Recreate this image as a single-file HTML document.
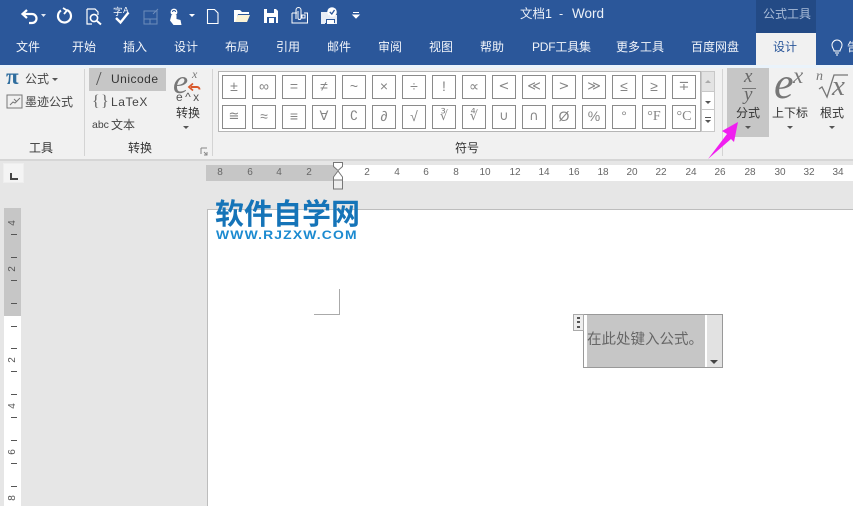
<!DOCTYPE html>
<html><head><meta charset="utf-8">
<style>
html,body{margin:0;padding:0}
body{width:853px;height:506px;overflow:hidden;position:relative;background:#e6e6e6;font-family:"Liberation Sans","Noto Sans CJK SC",sans-serif;color:#333}
div,span.a{position:absolute}
.t{position:absolute;white-space:nowrap;line-height:16px;font-size:12px}
.w{color:#f2f5fa;top:39px}
.r{position:absolute;top:167px;font-size:10px;line-height:12px;width:20px;text-align:center;color:#666}
.s{position:absolute;width:22px;height:22px;border:1px solid #8a8a8a;background:#fff;text-align:center;color:#858585;font-size:14px;line-height:21px;font-family:"Liberation Sans","DejaVu Sans",sans-serif}
.s1{top:75px}.s2{top:105px}
.d{font-family:"DejaVu Sans",sans-serif;font-size:13px}
.tick{position:absolute;left:11px;width:6px;height:1px;background:#555}
.vn{position:absolute;left:6px;width:14px;height:12px;font-size:10px;line-height:12px;text-align:center;color:#555;transform:rotate(-90deg)}
.tri{position:absolute;width:0;height:0;border-left:3px solid transparent;border-right:3px solid transparent;border-top:3px solid #555}
.sep{position:absolute;width:1px;background:#d4d4d4}
</style></head>
<body>
<div style="left:0;top:0;width:853px;height:65px;background:#2b579a"></div>
<div style="left:756px;top:0;width:60px;height:33px;background:#234a85"></div>
<div style="left:756px;top:33px;width:60px;height:32px;background:#f1f1f1"></div>

<svg style="position:absolute;left:0;top:0" width="370" height="30" viewBox="0 0 370 30">
<g fill="none" stroke="#fff" stroke-width="2.2">
<path d="M23 14h9a4.500 4.500 0 0 1 0 9h-3"/><path d="M27 10l-4.500 4 4.500 4"/>
<path d="M67 10a6.500 6.500 0 1 1-6 0.500"/><path d="M63 8l4 2.500-3 3.500" stroke-width="1.800"/>
</g>
<path d="M41 14h5l-2.500 3z" fill="#dfe6f2"/>
<g fill="none" stroke="#fff" stroke-width="1.200">
<path d="M87 9h8l3 3v3M87 9v15h5"/><circle cx="94" cy="18" r="3.600" stroke-width="1.600"/><path d="M97 21l4 3.500" stroke-width="2"/>
</g>
<text x="113" y="15" font-size="9.500" fill="#fff" font-family="Noto Sans CJK SC">字</text>
<text x="123" y="13" font-size="8.500" fill="#fff">A</text>
<path d="M116 18l4.500 4.500 8-10" fill="none" stroke="#fff" stroke-width="2.400"/>
<g fill="none" stroke="#6d8cba" stroke-width="1">
<path d="M144 11h13v13h-13zM144 19h13M150 19v5M153 14l5-5"/>
</g>
<g fill="#fff"><circle cx="174" cy="12" r="3.400"/><path d="M171.500 15h5v4l4 1 1 5h-8l-3.500-4.500z"/></g>
<path d="M172.500 12a1.500 1.500 0 0 1 3 0" stroke="#2b579a" fill="none"/>
<path d="M189 14h6l-3 3z" fill="#fff"/>
<path d="M207.500 9.500h7l3.500 3.500v10.500h-10.500z" fill="none" stroke="#fff" stroke-width="1.100"/>
<path d="M234 22v-12h6l2 2h7v2h-11l-2 8z" fill="#fff"/><path d="M235 22l3-7h12l-3 7z" fill="#fbf3d6"/>
<path d="M264 9h12l2 2v12h-14z" fill="#fff"/><path d="M267 9h7v4h-7zM267 17h9v6h-9z" fill="#2b579a"/><path d="M269 18h5v5h-5z" fill="#fff"/>
<g fill="none" stroke="#fff" stroke-width="1">
<path d="M292 13h5M304 13h3.500v10h-15.500v-10"/><path d="M296 19v-9a2.500 2.500 0 0 1 5 0v8a1.500 1.500 0 0 1-3 0v-7"/><path d="M302 15h3v3h-3z"/>
</g>
<path d="M321 12h8v4h5v-1h3v9h-4v-1h-8v1h-4z" fill="#e8edf5"/><circle cx="332" cy="12" r="4.800" fill="#fff"/><path d="M329.800 12l2 2 2.700-4" stroke="#2b579a" stroke-width="1.300" fill="none"/><path d="M326 19h9v4h-9z" fill="#2b579a"/><path d="M327 20h7v4h-7z" fill="#fff"/>
<path d="M353 12.500h6M353 15h6l-3 3z" stroke="#fff" stroke-width="1" fill="#fff"/>
</svg>

<span class="t" style="left:520px;top:6px;color:#eef2f8;font-size:12.500px">文档1</span>
<span class="t" style="left:559px;top:6px;color:#eef2f8;font-size:12.500px">-</span>
<span class="t" style="left:572px;top:6px;color:#eef2f8;font-size:13.500px">Word</span>
<span class="t" style="left:763px;top:6px;color:#a9bcd8">公式工具</span>
<span class="t w" style="left:16px">文件</span>
<span class="t w" style="left:72px">开始</span>
<span class="t w" style="left:123px">插入</span>
<span class="t w" style="left:174px">设计</span>
<span class="t w" style="left:225px">布局</span>
<span class="t w" style="left:276px">引用</span>
<span class="t w" style="left:327px">邮件</span>
<span class="t w" style="left:378px">审阅</span>
<span class="t w" style="left:429px">视图</span>
<span class="t w" style="left:480px">帮助</span>
<span class="t w" style="left:532px;letter-spacing:-.2px">PDF工具集</span>
<span class="t w" style="left:616px">更多工具</span>
<span class="t w" style="left:691px">百度网盘</span>
<span class="t" style="left:773px;top:39px;color:#2b579a">设计</span>
<svg style="position:absolute;left:829px;top:39px" width="16" height="18"><path d="M5 12c0-2-2-3-2-6a5 5 0 0 1 10 0c0 3-2 4-2 6zM6 14h4M7 16h2" fill="none" stroke="#fff"/></svg>
<span class="t w" style="left:847px">告</span>

<div style="left:0;top:65px;width:853px;height:95px;background:#f1f1f1"></div>
<div style="left:0;top:65px;width:853px;height:3px;background:#eaf3fb"></div>
<div style="left:0;top:159px;width:853px;height:2px;background:#d6d6d6"></div>
<div class="sep" style="left:84px;top:69px;height:87px"></div>
<div class="sep" style="left:212px;top:69px;height:87px"></div>
<div class="sep" style="left:722px;top:69px;height:87px"></div>

<span class="t" style="left:6px;top:65px;font-size:23px;line-height:24px;font-family:'Liberation Serif',serif;color:#2f6d9e;font-weight:bold">π</span>
<span class="t" style="left:25px;top:71px;color:#444">公式</span><div class="tri" style="left:52px;top:78px"></div>
<svg style="position:absolute;left:6px;top:94px" width="18" height="16"><rect x="1" y="1" width="15" height="13" fill="#f0f0f0" stroke="#777"/><path d="M4 11l3-3 2 1 5-5M8 5l3 3" fill="none" stroke="#777"/></svg>
<span class="t" style="left:25px;top:94px;color:#444">墨迹公式</span>
<span class="t" style="left:29px;top:140px">工具</span>

<div style="left:89px;top:68px;width:77px;height:23px;background:#c6c6c6"></div>
<span class="t" style="left:96px;top:69px;font-size:20px;line-height:20px;color:#555;font-family:'Liberation Serif',serif">/</span>
<span class="t" style="left:111px;top:71px;color:#333;letter-spacing:.5px">Unicode</span>
<span class="t" style="left:92px;top:92px;font-size:16px;line-height:20px;color:#666;font-family:'Liberation Serif',serif">{</span>
<span class="t" style="left:101px;top:92px;font-size:16px;line-height:20px;color:#666;font-family:'Liberation Serif',serif">}</span>
<span class="t" style="left:111px;top:94px;letter-spacing:.6px;color:#444">LaTeX</span>
<span class="t" style="left:92px;top:117px;font-size:10.500px;color:#444">abc</span>
<span class="t" style="left:111px;top:117px;color:#444">文本</span>
<span class="t" style="left:173px;top:68px;font-size:34px;line-height:30px;font-family:'Liberation Serif',serif;font-style:italic;color:#777">e</span>
<span class="t" style="left:192px;top:66px;font-size:12px;font-family:'Liberation Serif',serif;font-style:italic;color:#777">x</span>
<svg style="position:absolute;left:187px;top:82px" width="16" height="12"><path d="M4 5h6a2.500 2.500 0 0 1 2.500 2.500" fill="none" stroke="#d9582b" stroke-width="2"/><path d="M6 1.500L2 5l4 3.500" fill="none" stroke="#d9582b" stroke-width="1.800"/></svg>
<span class="t" style="left:176px;top:90px;font-size:12px;line-height:14px;color:#555;letter-spacing:2.400px">e^x</span>
<span class="t" style="left:176px;top:105px">转换</span>
<div class="tri" style="left:183px;top:126px"></div>
<span class="t" style="left:128px;top:140px">转换</span>
<svg style="position:absolute;left:200px;top:147px" width="9" height="9"><path d="M1 1h6M1 1v6M7 8l-3-3M7 5v3H4" fill="none" stroke="#888"/></svg>

<div style="left:218px;top:71px;width:483px;height:61px;background:#fff;border:1px solid #b5b5b5;box-sizing:border-box"></div>
<div class="s s1" style="left:222px">±</div><div class="s s1" style="left:252px">∞</div><div class="s s1" style="left:282px">=</div><div class="s s1" style="left:312px">≠</div><div class="s s1" style="left:342px">~</div><div class="s s1" style="left:372px">×</div><div class="s s1" style="left:402px">÷</div><div class="s s1" style="left:432px">!</div><div class="s s1" style="left:462px">∝</div><div class="s s1 d" style="left:492px">&lt;</div><div class="s s1 d" style="left:522px">≪</div><div class="s s1 d" style="left:552px">&gt;</div><div class="s s1 d" style="left:582px">≫</div><div class="s s1" style="left:612px">≤</div><div class="s s1" style="left:642px">≥</div><div class="s s1 d" style="left:672px">∓</div>
<div class="s s2 d" style="left:222px">≅</div><div class="s s2" style="left:252px">≈</div><div class="s s2" style="left:282px">≡</div><div class="s s2 d" style="left:312px">∀</div><div class="s s2 d" style="left:342px">∁</div><div class="s s2" style="left:372px">∂</div><div class="s s2" style="left:402px">√</div><div class="s s2 d" style="left:432px">∛</div><div class="s s2 d" style="left:462px">∜</div><div class="s s2 d" style="left:492px">∪</div><div class="s s2 d" style="left:522px">∩</div><div class="s s2" style="left:552px">Ø</div><div class="s s2" style="left:582px">%</div><div class="s s2" style="left:612px">°</div><div class="s s2" style="left:642px;font-family:'Liberation Serif',serif">°F</div><div class="s s2" style="left:672px;font-family:'Liberation Serif',serif">°C</div>
<div style="left:701px;top:71px;width:14px;height:21px;background:#e3e3e3;border:1px solid #c8c8c8;box-sizing:border-box"></div>
<div style="left:701px;top:92px;width:14px;height:18px;background:#fff;border:1px solid #c8c8c8;border-top:0;box-sizing:border-box"></div>
<div style="left:701px;top:110px;width:14px;height:22px;background:#fff;border:1px solid #c8c8c8;border-top:0;box-sizing:border-box"></div>
<div class="tri" style="left:705px;top:101px"></div>
<div style="left:705px;top:117px;width:6px;height:1px;background:#555"></div>
<div class="tri" style="left:705px;top:120px"></div>
<div class="tri" style="left:705px;top:80px;border-top:0;border-bottom:3px solid #aaa"></div>
<span class="t" style="left:455px;top:140px">符号</span>

<div style="left:727px;top:68px;width:42px;height:69px;background:#c6c6c6"></div>
<span class="t" style="left:744px;top:67px;font-size:19px;line-height:20px;font-family:'Liberation Serif',serif;font-style:italic;color:#666">x</span>
<div style="left:742px;top:88px;width:14px;height:1px;background:#777"></div>
<span class="t" style="left:744px;top:85px;font-size:19px;line-height:20px;font-family:'Liberation Serif',serif;font-style:italic;color:#666">y</span>
<span class="t" style="left:736px;top:105px">分式</span><div class="tri" style="left:745px;top:126px"></div>
<span class="t" style="left:774px;top:64px;font-size:44px;line-height:40px;font-family:'Liberation Serif',serif;font-style:italic;color:#777">e</span>
<span class="t" style="left:793px;top:65px;font-size:23px;line-height:22px;font-family:'Liberation Serif',serif;font-style:italic;color:#777">x</span>
<span class="t" style="left:772px;top:105px">上下标</span><div class="tri" style="left:787px;top:126px"></div>
<span class="t" style="left:816px;top:69px;font-size:14px;font-family:'Liberation Serif',serif;font-style:italic;color:#777">n</span>
<svg style="position:absolute;left:815px;top:72px" width="36" height="28"><path d="M4 17l3-2 5 10 7-22h14" fill="none" stroke="#777" stroke-width="1.300"/></svg>
<span class="t" style="left:832px;top:73px;font-size:29px;line-height:26px;font-family:'Liberation Serif',serif;font-style:italic;color:#777">x</span>
<span class="t" style="left:820px;top:105px">根式</span><div class="tri" style="left:829px;top:126px"></div>
<svg style="position:absolute;left:700px;top:115px" width="50" height="50"><path d="M38 7L22 16l5 3L8 44 31 24l3 3z" fill="#f01ff0"/></svg>

<div style="left:3px;top:163px;width:21px;height:20px;background:#f4f4f4;border:1px solid #eee;box-sizing:border-box"></div>
<div style="left:10px;top:173px;width:2px;height:7px;background:#444"></div>
<div style="left:10px;top:178px;width:8px;height:2px;background:#444"></div>

<div style="left:206px;top:165px;width:647px;height:16px;background:#fff"></div>
<div style="left:206px;top:165px;width:131px;height:16px;background:#c6c6c6"></div>
<span class="r" style="left:210px">8</span><span class="r" style="left:240px">6</span><span class="r" style="left:269px">4</span><span class="r" style="left:299px">2</span><span class="r" style="left:357px">2</span><span class="r" style="left:387px">4</span><span class="r" style="left:416px">6</span><span class="r" style="left:446px">8</span><span class="r" style="left:475px">10</span><span class="r" style="left:505px">12</span><span class="r" style="left:534px">14</span><span class="r" style="left:564px">16</span><span class="r" style="left:593px">18</span><span class="r" style="left:622px">20</span><span class="r" style="left:651px">22</span><span class="r" style="left:681px">24</span><span class="r" style="left:710px">26</span><span class="r" style="left:740px">28</span><span class="r" style="left:770px">30</span><span class="r" style="left:799px">32</span><span class="r" style="left:828px">34</span>
<svg style="position:absolute;left:331px;top:161px" width="14" height="30"><path d="M2.500 1.500h9v4l-4.500 4-4.500-4zM7 10l-4.500 6v3h9v-3z" fill="#fff" stroke="#777"/><path d="M2.500 19h9v9h-9z" fill="#eee" stroke="#777"/></svg>

<div style="left:4px;top:208px;width:17px;height:298px;background:#fff"></div>
<div style="left:4px;top:208px;width:17px;height:108px;background:#c6c6c6"></div>
<div class="vn" style="top:217px">4</div><div class="vn" style="top:263px">2</div><div class="vn" style="top:354px">2</div><div class="vn" style="top:400px">4</div><div class="vn" style="top:446px">6</div><div class="vn" style="top:492px">8</div>
<div class="tick" style="top:234px"></div><div class="tick" style="top:257px"></div><div class="tick" style="top:280px"></div><div class="tick" style="top:303px"></div><div class="tick" style="top:326px"></div><div class="tick" style="top:348px"></div><div class="tick" style="top:371px"></div><div class="tick" style="top:394px"></div><div class="tick" style="top:417px"></div><div class="tick" style="top:440px"></div><div class="tick" style="top:463px"></div><div class="tick" style="top:486px"></div>

<div style="left:207px;top:209px;width:646px;height:297px;background:#fff;border-left:1px solid #bdbdbd;border-top:1px solid #bdbdbd;box-sizing:border-box"></div>
<div style="left:339px;top:289px;width:1px;height:26px;background:#aaa"></div>
<div style="left:314px;top:314px;width:26px;height:1px;background:#aaa"></div>

<span class="t" style="left:215px;top:198px;font-size:29px;line-height:34px;font-weight:bold;color:#1574b8">软件自学网</span>
<span class="t" style="left:216px;top:230px;font-size:11.500px;line-height:13px;font-weight:bold;color:#1b8ad0;letter-spacing:.95px;transform:scaleX(1.210);transform-origin:0 0">WWW.RJZXW.COM</span>

<div style="left:583px;top:314px;width:140px;height:54px;background:#fff;border:1px solid #999;box-sizing:border-box"></div>
<div style="left:587px;top:315px;width:118px;height:52px;background:#c6c6c6"></div>
<div style="left:707px;top:315px;width:15px;height:52px;background:#e2e2e2"></div>
<div class="tri" style="left:710px;top:360px;border-left-width:4px;border-right-width:4px;border-top:4px solid #444"></div>
<span class="t" style="left:587px;top:331px;font-size:14.500px;line-height:18px;color:#666">在此处键入公式。</span>
<div style="left:573px;top:314px;width:11px;height:17px;background:#eee;border:1px solid #aaa;box-sizing:border-box"></div>
<div style="left:577px;top:317px;width:3px;height:2px;background:#555"></div>
<div style="left:577px;top:321px;width:3px;height:2px;background:#555"></div>
<div style="left:577px;top:326px;width:3px;height:2px;background:#555"></div>
</body></html>
